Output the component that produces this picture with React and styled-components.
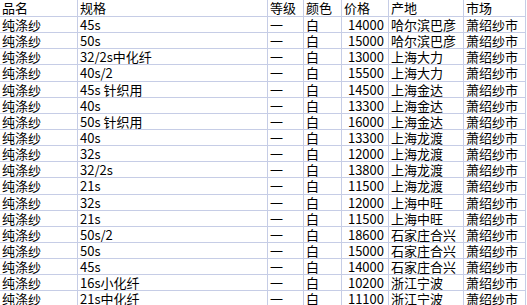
import React from 'react';
import styled, { createGlobalStyle } from 'styled-components';

const GlobalStyle = createGlobalStyle`
    html, body {
        margin: 0;
        padding: 0;
        background: #ffffff;
        overflow: hidden;
    }
`;

const Sheet = styled.div`
    display: grid;
    grid-template-columns: 77px 189px 35px 37px 46px 74px 61px;
    grid-template-rows: 16px;
    grid-auto-rows: 15.15px;
    gap: 1px;
    width: 525px;
    padding-right: 1px;
    background-color: #c6cde6;
    font-family: "Noto Sans CJK SC", "Noto Sans", sans-serif;
    font-size: 13px;
    color: #000000;
`;

const Cell = styled.div`
    background-color: #ffffff;
    padding: 0 ${(p) => (p.$num ? '4px' : '0')} 0 ${(p) => (p.$num ? '0' : '2px')};
    text-align: ${(p) => (p.$num ? 'right' : 'left')};
    line-height: 15px;
    white-space: nowrap;
    overflow: hidden;
`;

const headers = ['品名', '规格', '等级', '颜色', '价格', '产地', '市场'];

const rows = [
    ['45s', 14000, '哈尔滨巴彦'],
    ['50s', 15000, '哈尔滨巴彦'],
    ['32/2s中化纤', 13000, '上海大力'],
    ['40s/2', 15500, '上海大力'],
    ['45s 针织用', 14500, '上海金达'],
    ['40s', 13300, '上海金达'],
    ['50s 针织用', 16000, '上海金达'],
    ['40s', 13300, '上海龙渡'],
    ['32s', 12000, '上海龙渡'],
    ['32/2s', 13800, '上海龙渡'],
    ['21s', 11500, '上海龙渡'],
    ['32s', 12000, '上海中旺'],
    ['21s', 11500, '上海中旺'],
    ['50s/2', 18600, '石家庄合兴'],
    ['50s', 15000, '石家庄合兴'],
    ['45s', 14000, '石家庄合兴'],
    ['16s小化纤', 10200, '浙江宁波'],
    ['21s中化纤', 11100, '浙江宁波'],
];

function App() {
    return (
        <>
            <GlobalStyle />
            <Sheet>
                {headers.map((h) => (
                    <Cell key={h}>{h}</Cell>
                ))}
                {rows.map(([spec, price, origin], i) => (
                    <React.Fragment key={i}>
                        <Cell>纯涤纱</Cell>
                        <Cell>{spec}</Cell>
                        <Cell>一</Cell>
                        <Cell>白</Cell>
                        <Cell $num>{price}</Cell>
                        <Cell>{origin}</Cell>
                        <Cell>萧绍纱市</Cell>
                    </React.Fragment>
                ))}
            </Sheet>
        </>
    );
}

export default App;
